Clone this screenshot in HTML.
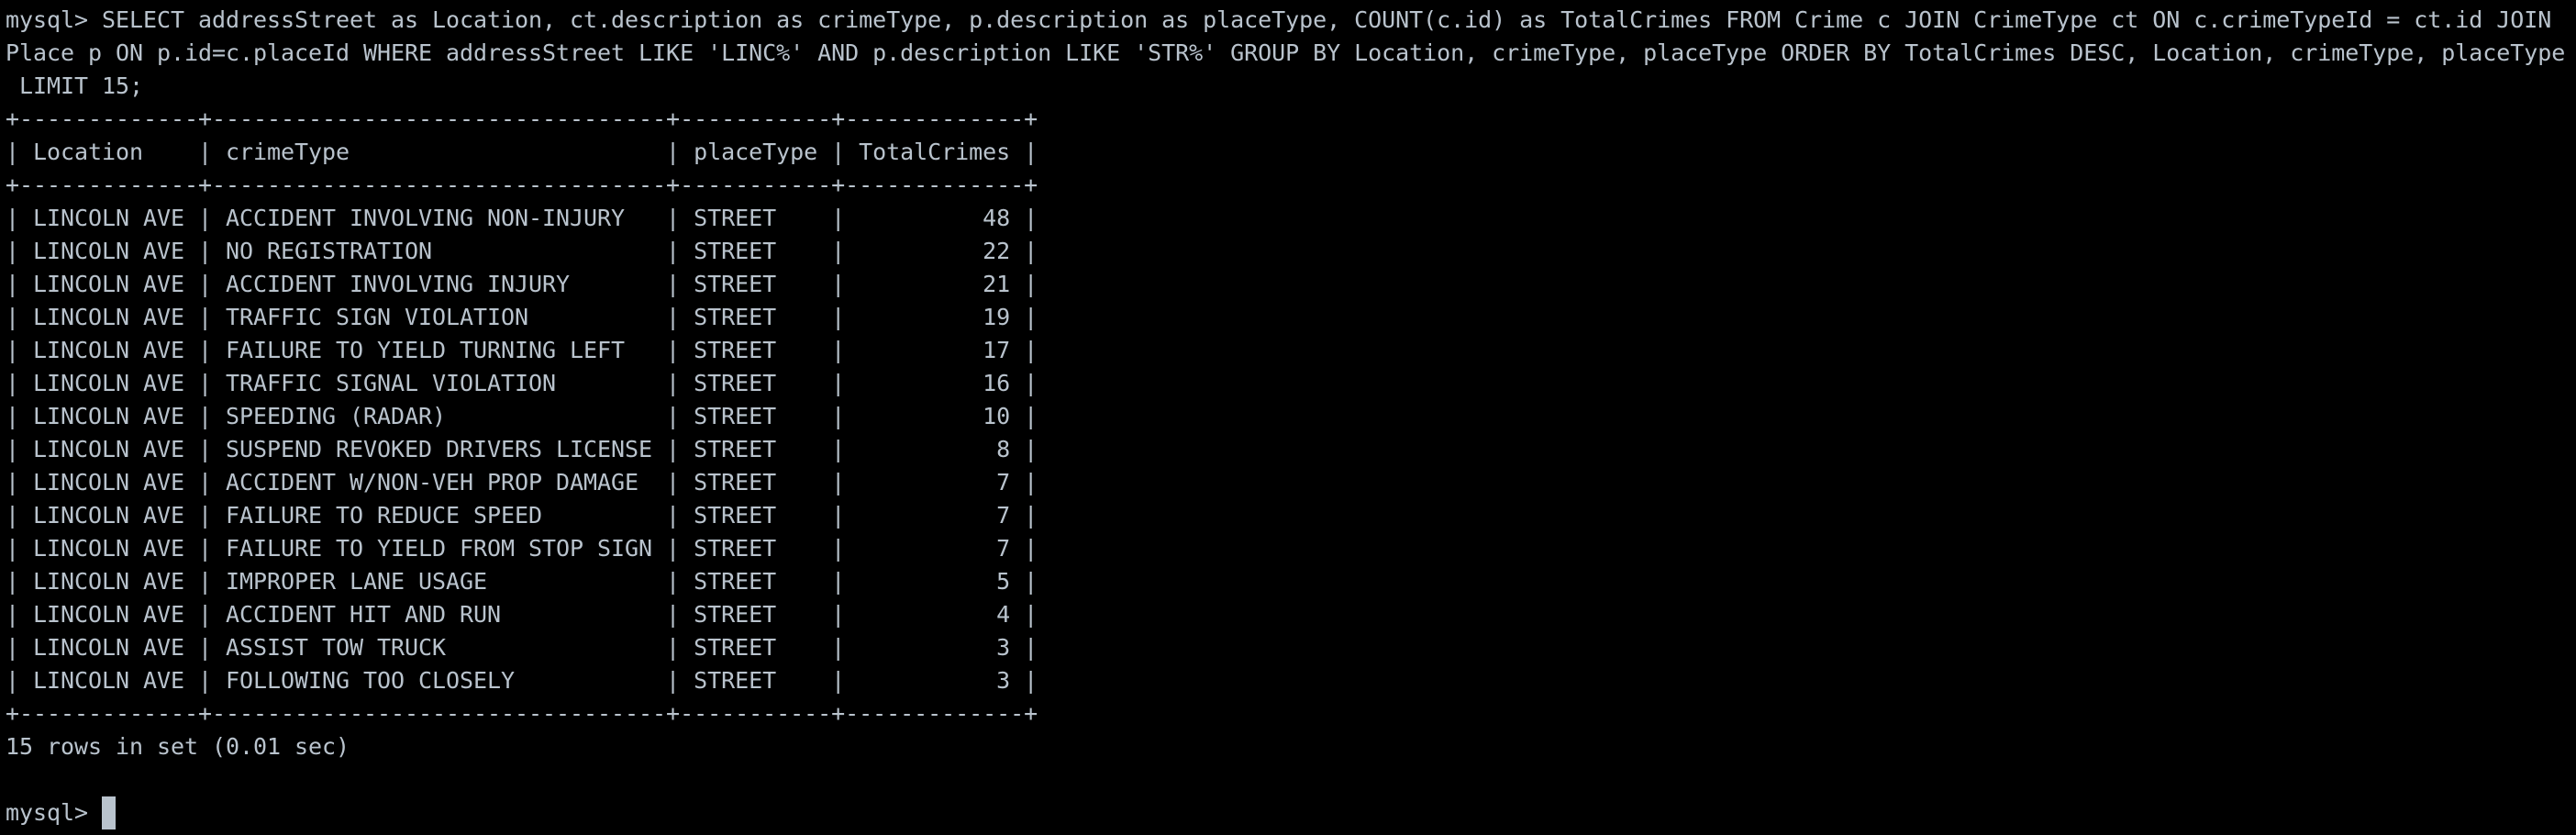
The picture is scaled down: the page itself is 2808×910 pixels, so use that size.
<!DOCTYPE html>
<html><head><meta charset="utf-8"><style>
html,body{margin:0;padding:0;background:#000;width:2808px;height:910px;overflow:hidden}
pre{margin:0;padding:4px 0 0 6px;font-family:"DejaVu Sans Mono","Liberation Mono",monospace;font-size:25px;letter-spacing:-0.05px;line-height:36px;color:#b9c3cd;white-space:pre}
.cur{display:inline-block;width:15px;height:36px;background:#b9c3cd;vertical-align:top}
</style></head><body><pre>mysql&gt; SELECT addressStreet as Location, ct.description as crimeType, p.description as placeType, COUNT(c.id) as TotalCrimes FROM Crime c JOIN CrimeType ct ON c.crimeTypeId = ct.id JOIN
Place p ON p.id=c.placeId WHERE addressStreet LIKE 'LINC%' AND p.description LIKE 'STR%' GROUP BY Location, crimeType, placeType ORDER BY TotalCrimes DESC, Location, crimeType, placeType
 LIMIT 15;
+-------------+---------------------------------+-----------+-------------+
| Location    | crimeType                       | placeType | TotalCrimes |
+-------------+---------------------------------+-----------+-------------+
| LINCOLN AVE | ACCIDENT INVOLVING NON-INJURY   | STREET    |          48 |
| LINCOLN AVE | NO REGISTRATION                 | STREET    |          22 |
| LINCOLN AVE | ACCIDENT INVOLVING INJURY       | STREET    |          21 |
| LINCOLN AVE | TRAFFIC SIGN VIOLATION          | STREET    |          19 |
| LINCOLN AVE | FAILURE TO YIELD TURNING LEFT   | STREET    |          17 |
| LINCOLN AVE | TRAFFIC SIGNAL VIOLATION        | STREET    |          16 |
| LINCOLN AVE | SPEEDING (RADAR)                | STREET    |          10 |
| LINCOLN AVE | SUSPEND REVOKED DRIVERS LICENSE | STREET    |           8 |
| LINCOLN AVE | ACCIDENT W/NON-VEH PROP DAMAGE  | STREET    |           7 |
| LINCOLN AVE | FAILURE TO REDUCE SPEED         | STREET    |           7 |
| LINCOLN AVE | FAILURE TO YIELD FROM STOP SIGN | STREET    |           7 |
| LINCOLN AVE | IMPROPER LANE USAGE             | STREET    |           5 |
| LINCOLN AVE | ACCIDENT HIT AND RUN            | STREET    |           4 |
| LINCOLN AVE | ASSIST TOW TRUCK                | STREET    |           3 |
| LINCOLN AVE | FOLLOWING TOO CLOSELY           | STREET    |           3 |
+-------------+---------------------------------+-----------+-------------+
15 rows in set (0.01 sec)

mysql&gt; <span class="cur"></span></pre></body></html>
